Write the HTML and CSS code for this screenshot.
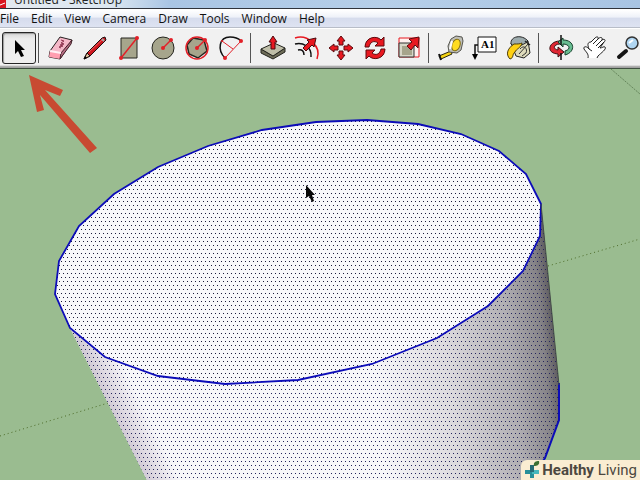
FILE: index.html
```html
<!DOCTYPE html>
<html lang="en">
<head>
<meta charset="utf-8">
<title>Untitled - SketchUp</title>
<link rel="stylesheet" href="styles.css">
</head>
<body>
<div class="app">
  <header class="titlebar">
    <svg class="app-icon" viewBox="0 0 12 16" aria-hidden="true"><path d="M0 4h6v8l-4 3-2-1z" fill="#d9141e"/><path d="M0 9l5-2" stroke="#fff"/></svg>
    <span class="title">Untitled - SketchUp</span>
  </header>
  <nav class="menubar" aria-label="Main menu">
    <button>File</button><button>Edit</button><button>View</button><button>Camera</button><button>Draw</button><button>Tools</button><button>Window</button><button>Help</button>
  </nav>
  <div class="toolbar" role="toolbar" aria-label="Tools">
    <button class="tool active" aria-label="Select"><svg viewBox="-17 -17 34 34"><path d="M-4-8V6L-1 3 2 9 5 8 2 2H6z" fill="#000"/></svg></button>
    <span class="sep"></span>
    <button class="tool" aria-label="Eraser"><svg viewBox="-17 -17 34 34"><path d="M-1-11L11-8 3 5-1 11-12 9-11 3z" fill="#f5b8c8" stroke="#282022"/><path d="M-11 3L0 5-1 11-12 9z" fill="#ff9eb0"/><path d="M0 5L11-8 10-4-1 11z" fill="#b66c82" stroke="#402028"/><path d="M-11 3L0 5" stroke="#fff0f4" stroke-width="2"/><path d="M0-8l3 1-3 2 3 1-4 1 3 1-4 1 2 1" fill="none" stroke="#903550"/></svg></button>
    <button class="tool" aria-label="Pencil"><svg viewBox="-17 -17 34 34"><path d="M-11 11L-8 5 7-10 10-11 11-8-5 8z" fill="#ce1820" stroke="#201010"/><path d="M-11 11L-8 5-5 8z" fill="#e4c9a0" stroke="#201010"/><path d="M-11 11L-10 8-8 10z"/><path d="M-6 4L7-8" stroke="#f05a5a"/><path d="M7-9l2 2" stroke="#aaa" stroke-width="2"/></svg></button>
    <button class="tool" aria-label="Rectangle"><svg viewBox="-17 -17 34 34"><path d="M-8-10H8V10H-8z" fill="#a6a58c" stroke="#24241e"/><path d="M-8 10L8-10" stroke="#e22028" stroke-width="1.5"/><circle cx="-8" cy="10" r="2" fill="#e22028"/><circle cx="8" cy="-10" r="2" fill="#e22028"/></svg></button>
    <button class="tool" aria-label="Circle"><svg viewBox="-17 -17 34 34"><circle r="11" fill="#a6a58c" stroke="#24241e"/><path d="M0 0L8-8" stroke="#e22028" stroke-width="1.5"/><circle r="2" fill="#e22028"/><circle cx="8" cy="-8" r="2" fill="#e22028"/></svg></button>
    <button class="tool" aria-label="Polygon"><svg viewBox="-17 -17 34 34"><path d="M-4-10L7-8 10 3 1 10-8 6-10-3z" fill="#a6a58c" stroke="#24241e" stroke-width="1.5"/><circle r="11" fill="none" stroke="#e22028" stroke-width="1.5"/><path d="M0 0L8-8" stroke="#e22028" stroke-width="1.5"/><circle r="2" fill="#e22028"/><circle cx="8" cy="-8" r="2" fill="#e22028"/></svg></button>
    <button class="tool" aria-label="Arc"><svg viewBox="-17 -17 34 34"><path d="M-6 10C-14 2-12-11-1-11 4-11 8-9 10-7" fill="none" stroke="#111" stroke-width="1.5"/><path d="M-6 10L10-7M-9-7L2 1" stroke="#e22028" fill="none"/><circle cx="-6" cy="10" r="2" fill="#e22028"/><circle cx="10" cy="-7" r="2" fill="#e22028"/><circle cx="-9" cy="-7" r="1" fill="#e22028"/></svg></button>
    <span class="sep"></span>
    <button class="tool" aria-label="Push/Pull"><svg viewBox="-17 -17 34 34"><path d="M-12 1L0 8 12 0V4L0 11-12 5z" fill="#6d6c58" stroke="#24241e"/><path d="M-12 1L1-5 12 0 0 8z" fill="#bfbea8" stroke="#24241e"/><path d="M0-12L4-6H2V1H-2V-6H-4z" fill="#e81820" stroke="#4c0a0e"/></svg></button>
    <button class="tool" aria-label="Follow Me"><svg viewBox="-17 -17 34 34"><path d="M-12-10C0-14 15-2 10 11" fill="none" stroke="#e81820" stroke-width="1.5"/><path d="M-12-4C-5-6 5-2 4 9M-9 2C-5 1-3 3-3 7" fill="none" stroke="#111" stroke-width="1.5"/><path d="M9-10L7-1 5-3-1 3-4 0 2-6 0-8z" fill="#e81820" stroke="#4c0a0e"/></svg></button>
    <button class="tool" aria-label="Move"><svg viewBox="-17 -17 34 34"><g id="arm"><path d="M0-12L4-7H2V-3H-2V-7H-4z" fill="#e81820" stroke="#5c0a0e"/></g><use href="#arm" transform="rotate(90)"/><use href="#arm" transform="rotate(180)"/><use href="#arm" transform="rotate(270)"/></svg></button>
    <button class="tool" aria-label="Rotate"><svg viewBox="-17 -17 34 34"><path id="turn" d="M-10-1C-10-11 2-13 6-8L9-11V-2H0L3-5C-1-8-5-6-6-1z" fill="#e81820" stroke="#5c0a0e"/><use href="#turn" transform="rotate(180)"/></svg></button>
    <button class="tool" aria-label="Scale"><svg viewBox="-17 -17 34 34"><path d="M-10-10H10V9H-10z" fill="#fff0ee" stroke="#e81820"/><path d="M-10-5H5V9H-10z" fill="#d7d6c7" stroke="#333"/><path d="M-7-2H3V7H-7z" fill="#a6a58c"/><path d="M10-11L9 0 6-3 2 2-2-2 3-6 0-9z" fill="#e81820" stroke="#5c0a0e"/></svg></button>
    <span class="sep"></span>
    <button class="tool" aria-label="Tape Measure"><svg viewBox="-17 -17 34 34"><path d="M-12 8L0 3 1 6-10 11z" fill="#f4d413" stroke="#272310"/><path d="M-12 6L-10 12" stroke="#111" stroke-width="2"/><path d="M-3-2L0-9 5-12 11-11 12-7 10 2 6 5-2 4z" fill="#bebeb8" stroke="#55554f"/><ellipse cx="5" cy="-3" rx="4" ry="6" fill="#ffdc20" stroke="#836e10" transform="rotate(20 5 -3)"/><path d="M-1 1L1-7" stroke="#fff" stroke-width="2"/></svg></button>
    <button class="tool" aria-label="Text"><svg viewBox="-17 -17 34 34"><path d="M-7-11H11V4H-7z" fill="#fff" stroke="#111"/><path d="M-7-3H-10V7" fill="none" stroke="#111" stroke-width="1.5"/><path d="M-13 6H-7L-10 12z"/><text class="label-glyph" x="-4" y="0">A1</text></svg></button>
    <button class="tool" aria-label="Paint Bucket"><svg viewBox="-17 -17 34 34"><path d="M-8-5L0-11 9-7 11 5 5 10-3 8z" fill="#dedbbb" stroke="#222"/><path d="M-8-4C-9-12 3-14 9-7 4-2-5 0-8-4z" fill="#9dabad" stroke="#222"/><path d="M-9 11C-14 6-11 0-5-4-1-4 1-4 3-5 2 0-3 1-4 4-7 6-5 10-9 11z" fill="#ffd114" stroke="#4c3c08"/><path d="M1 1C5-4 9 1 7 5L3 8M0 6L9-4" fill="none" stroke="#333"/><path d="M6-7L11-3" stroke="#222" stroke-width="1.5"/></svg></button>
    <span class="sep"></span>
    <button class="tool" aria-label="Orbit"><svg viewBox="-17 -17 34 34"><path d="M-1-4C-7-4-9 1-3 2V-1L3 4-3 9V6C-16 5-12-7-1-7z" fill="#df2632" stroke="#3b1014"/><path d="M2-8C14-8 15 4 4 7V3C11 1 8-4 2-4V-1L-3-6 2-10z" fill="#68bd91" stroke="#123e29"/><path d="M0-13V-3M0 5V12" stroke="#111" stroke-width="1.5"/></svg></button>
    <button class="tool" aria-label="Pan"><svg viewBox="-17 -17 34 34"><path d="M-7 10C-6 6-9 4-11 1-12-2-8-2-6 1-8-4-7-6-4-6L0-10C2-12 4-11 3-9 6-12 8-10 7-8 10-10 11-7 9-6L5 0C7 0 9-2 10-1 12 1 6 5 3 8L2 10" fill="#fff" stroke="#222"/><path d="M3-9L-2-4M7-8L1-2M9-6L3 0M-6 1L-3 3" stroke="#222" fill="none"/></svg></button>
    <button class="tool" aria-label="Zoom"><svg viewBox="-17 -17 34 34"><path d="M-10 9L-3 3" stroke="#151515" stroke-width="4" stroke-linecap="round"/><circle cx="3" cy="-5" r="6" fill="#b0d6f2" stroke="#333" stroke-width="1.5"/><path d="M0-5L4-8" stroke="#fff" stroke-width="2"/></svg></button>
  </div>
  <main class="viewport">
    <svg class="scene" viewBox="0 69 640 411" preserveAspectRatio="xMinYMin slice" role="img" aria-label="Selected cylinder face">
      <defs>
        <pattern id="dots" width="4" height="8" patternUnits="userSpaceOnUse"><path d="M3 1h1v1h-1zM1 5h1v1h-1z" fill="#1c1c3c"/></pattern>
        <pattern id="side-dots" width="4" height="8" patternUnits="userSpaceOnUse"><path d="M3 1h1v1h-1zM1 5h1v1h-1z" fill="#24245c"/></pattern>
        <linearGradient id="shade" gradientUnits="userSpaceOnUse" x1="370" y1="330" x2="553" y2="312"><stop offset="0" stop-color="#f7f7f9"/><stop offset=".4" stop-color="#dcdadd"/><stop offset=".75" stop-color="#b0aeb2"/><stop offset=".93" stop-color="#858387"/><stop offset="1" stop-color="#5c5a5d"/></linearGradient>
        <linearGradient id="left-shade" gradientUnits="userSpaceOnUse" x1="108" y1="400" x2="134" y2="387"><stop offset="0" stop-color="#d2cbd6"/><stop offset="1" stop-color="#d2cbd6" stop-opacity="0"/></linearGradient>
        <path id="side" d="M70 328L147 480H536L545 458 559 420V385L541 204 298 300z"/>
        <path id="top" d="M541 204L526 174 499 151 461 134 418 124 367 120 316 122 262 130 208 146 158 167 114 194 79 226 59 261 55 294 70 328 105 357 158 376 225 384 298 380 372 364 437 338 488 306 523 271 540 236z"/>
      </defs>
      <path d="M0 69H640V480H0z" fill="#9abc90"/>
      <path d="M0 436L108 403M548 266L640 239" stroke="#4c6b28" stroke-dasharray="1 3"/>
      <path d="M611 69L640 94" stroke="#66865c" stroke-dasharray="2 1"/>
      <use href="#side" fill="url(#shade)"/><use href="#side" fill="url(#left-shade)"/><use href="#side" fill="url(#side-dots)"/>
      <use href="#top" fill="#f8f8fa"/><use href="#top" fill="url(#dots)"/>
      <use href="#top" fill="none" stroke="#0c0cb8" stroke-width="1.8"/>
      <path d="M559 383V420L545 458 536 472" fill="none" stroke="#0c0cb8" stroke-width="2"/>
      <path d="M541 204L559 385" stroke="#444b48" fill="none"/>
      <path d="M29 75L63 90 60 96 45 90 97 148 90 153 40 95 44 110 37 112z" fill="#c84a32"/>
      <path d="M306 185V198L309 196 312 202 314 201 312 195H315z" fill="#050505"/>
    </svg>
    <div class="watermark">
      <svg class="plus" viewBox="0 0 16 18" aria-hidden="true"><path d="M8 4V17M1 11H15" stroke="#278f99" stroke-width="4"/><path d="M8 11H15" stroke="#46b7bc" stroke-width="4"/><path d="M8 4V11" stroke="#256b76" stroke-width="4"/><path d="M10 5C9 1 12 0 15 0 16 4 13 5 10 5z" fill="#3c7032"/></svg>
      <span><b>Healthy</b> Living</span>
    </div>
  </main>
</div>
</body>
</html>
```
FILE: styles.css
```css
* { box-sizing: border-box; }

body {
  margin: 0;
  font-family: "Open Sans", "Noto Sans", sans-serif;
}

button {
  margin: 0;
  padding: 0;
  border: 0;
  background: none;
  color: #111;
  font: inherit;
}

.app {
  display: flex;
  flex-direction: column;
  height: 100vh;
  overflow: hidden;
}

.titlebar {
  display: flex;
  align-items: flex-end;
  gap: 2px;
  height: 9px;
  overflow: hidden;
  border-bottom: 1px solid #30343c;
  background: linear-gradient(90deg, #e3e9ef 0, #dce7f1 110px, #a9c5e4 170px, #b6cfe9 60%, #a8c4e3);
  font-size: 12px;
  line-height: 16px;
  color: #222;
}

.app-icon {
  flex: none;
  width: 12px;
  height: 16px;
  margin-bottom: -4px;
}

.menubar {
  display: flex;
  flex: none;
  gap: 12px;
  height: 19px;
  border-top: 1px solid #fff;
  border-bottom: 1px solid #b8bdc8;
  background: linear-gradient(#fff, #eff2f9 40%, #d6dced 50%, #dee3f2);
  font-size: 12px;
  line-height: 17px;
}

.toolbar {
  display: flex;
  flex: none;
  align-items: center;
  height: 41px;
  padding: 0 2px 1px;
  overflow: hidden;
  border-top: 1px solid #fff;
  border-bottom: 1px solid #3f5140;
  background: linear-gradient(#f1f1f1 36px, #999 38px, #aaa);
}

.tool {
  flex: none;
  width: 34px;
  height: 32px;
}

.tool svg {
  display: block;
  width: 34px;
  height: 34px;
  margin: -1px 0;
}

.active {
  border: 1px solid #252525;
  border-radius: 3px;
  background: linear-gradient(#d6d6d6, #ececec 20%, #eee);
  box-shadow: inset 1px 1px 1px #999;
}

.active svg {
  margin: -2px -1px;
}

.sep {
  flex: none;
  width: 8px;
  height: 30px;
  background: linear-gradient(#555, #555) 2px 0 / 1px 100% no-repeat;
}

.label-glyph {
  font: bold 11px "Liberation Serif", serif;
}

.viewport {
  position: relative;
  flex: 1;
  min-height: 0;
  background: #9abc90;
}

.scene {
  display: block;
  width: 100%;
  height: 100%;
}

.watermark {
  position: absolute;
  right: 0;
  bottom: 0;
  display: flex;
  align-items: center;
  gap: 2px;
  height: 20px;
  padding: 0 3px;
  border-radius: 6px 0 0 0;
  background: #faedd2;
  color: #4c4740;
  font: 15px/20px Roboto, sans-serif;
}

.plus {
  width: 16px;
  height: 18px;
}
```
